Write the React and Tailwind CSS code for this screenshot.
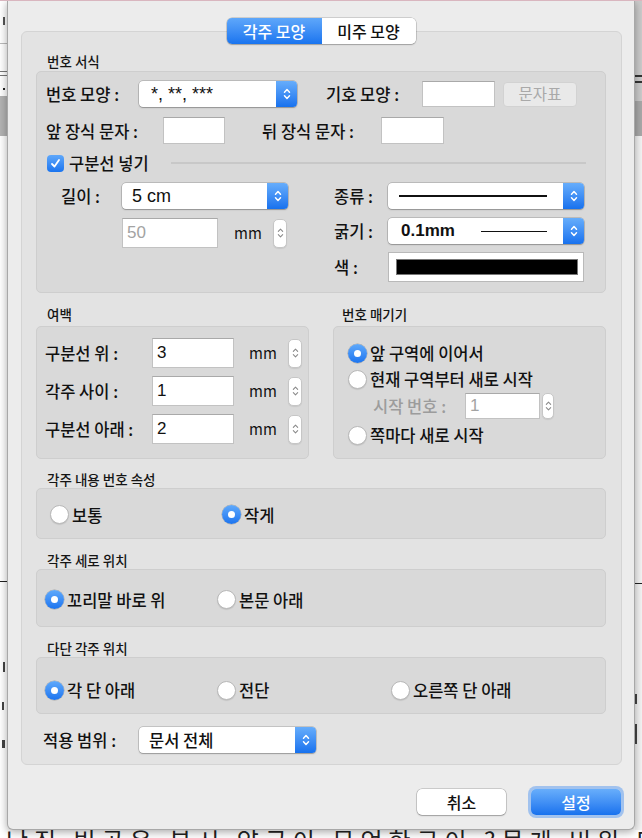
import React from "react";

const Chevrons = ({ color = "white", w = 8, h = 14, sw = 1.5 }) => (
  <svg width={w} height={h} viewBox="0 0 8 14" fill="none" stroke={color} strokeWidth={sw} strokeLinecap="round" strokeLinejoin="round">
    <path d="M1.5 5.2 L4 2.6 L6.5 5.2" />
    <path d="M1.5 8.8 L4 11.4 L6.5 8.8" />
  </svg>
);

function Select({ w, children }) {
  return (
    <div className={`flex ${w} h-[26px] rounded-[4px] bg-white shadow-[0_0_0_0.5px_rgba(0,0,0,0.28),0_1px_1.5px_rgba(0,0,0,0.22)] overflow-hidden shrink-0`}>
      <div className="flex-1 flex items-center pl-[10px] min-w-0">{children}</div>
      <div className="w-[21px] bg-gradient-to-b from-[#66adfb] to-[#1671ee] flex items-center justify-center">
        <Chevrons />
      </div>
    </div>
  );
}

function Input({ w, h, children, disabled }) {
  return (
    <div className={`${w} ${h} shrink-0 bg-white border border-[#c2c2c2] border-t-[#a9a9a9] flex items-center pl-[4px] font-['Liberation_Sans',sans-serif] text-[17px] ${disabled ? "text-[#a3a3a3]" : "text-[#111]"}`}>
      {children}
    </div>
  );
}

function Stepper({ w = "w-[14px]", h = "h-[29px]" }) {
  return (
    <div className={`${w} ${h} shrink-0 rounded-[5px] bg-white border border-[#c6c6c6] shadow-[0_1px_1px_rgba(0,0,0,0.08)] flex items-center justify-center`}>
      <Chevrons color="#8a8a8a" w={7} h={14} sw={1.2} />
    </div>
  );
}

function Radio({ on }) {
  return on ? (
    <div className="w-[19px] h-[19px] shrink-0 rounded-full bg-gradient-to-b from-[#5fa9fb] to-[#1b74ef] shadow-[0_0_0_0.5px_rgba(0,0,0,0.25)] flex items-center justify-center">
      <div className="w-[7px] h-[7px] rounded-full bg-white" />
    </div>
  ) : (
    <div className="w-[19px] h-[19px] shrink-0 rounded-full bg-white border border-[#b8b8b8] shadow-[0_1px_1px_rgba(0,0,0,0.1)]" />
  );
}

function Option({ on, w, children }) {
  return (
    <div className={`flex items-center ${w} shrink-0`}>
      <Radio on={on} />
      <span className="ml-[3px] text-[16.5px] leading-[20px] font-medium">{children}</span>
    </div>
  );
}

function GroupLabel({ children, ml = "ml-[11px]" }) {
  return <div className={`${ml} h-[16px] leading-[16px] text-[13.5px] font-medium text-[#151515]`}>{children}</div>;
}

const Label = ({ w, children, className = "" }) => (
  <span className={`${w} shrink-0 text-[16.5px] leading-[20px] font-medium whitespace-nowrap ${className}`}>{children}</span>
);

function Dialog() {
  return (
    <div className="relative z-10 w-[628px] h-[829px] shrink-0 bg-[#ececec] border-x border-b border-[#a8a8a8] rounded-b-[6px] shadow-[0_2px_8px_rgba(0,0,0,0.35)] flex flex-col pt-[17px]">
      {/* Tabs */}
      <div className="relative z-10 flex justify-center">
        <div className="flex h-[26px] rounded-[5px] shadow-[0_0_0_0.5px_rgba(0,0,0,0.25),0_1px_1.5px_rgba(0,0,0,0.2)] overflow-hidden text-[16px] font-medium">
          <div className="w-[95px] bg-gradient-to-b from-[#5ea7fa] to-[#1874ef] text-white flex items-center justify-center">각주 모양</div>
          <div className="w-[94px] bg-white text-[#111] flex items-center justify-center">미주 모양</div>
        </div>
      </div>

      {/* Outer group */}
      <div className="-mt-[13px] ml-[13px] w-[601px] h-[734px] shrink-0 rounded-[6px] bg-[#e3e3e3] border border-[#d4d4d4] pl-[14px] pt-[21px] flex flex-col">
        <GroupLabel>번호 서식</GroupLabel>
        <div className="mt-[2px] w-[570px] h-[222px] shrink-0 rounded-[5px] bg-[#d9d9d9] border border-[#cecece] pl-[9px] pt-[9px] flex flex-col">
          <div className="flex items-center h-[26px]">
            <Label w="w-[93px]">번호 모양 :</Label>
            <Select w="w-[158px]">
              <span className="font-['Liberation_Sans',sans-serif] text-[18px] ml-[2px]">*, **, ***</span>
            </Select>
            <Label w="w-[96px]" className="ml-[29px]">기호 모양 :</Label>
            <Input w="w-[73px]" h="h-[26px]" />
            <div className="ml-[8px] w-[74px] h-[25px] rounded-[4px] bg-[#e9e9e9] border border-[#d2d2d2] text-[#a9a9a9] text-[15.5px] flex items-center justify-center">문자표</div>
          </div>
          <div className="mt-[10px] flex items-center h-[27px]">
            <Label w="w-[117px]">앞 장식 문자 :</Label>
            <Input w="w-[62px]" h="h-[27px]" />
            <Label w="w-[119px]" className="ml-[37px]">뒤 장식 문자 :</Label>
            <Input w="w-[63px]" h="h-[27px]" />
          </div>
          <div className="mt-[9px] flex items-center h-[20px] pr-[19px]">
            <div className="ml-[1px] w-[17px] h-[17px] rounded-[4px] bg-gradient-to-b from-[#5ea7fa] to-[#1874ef] flex items-center justify-center">
              <svg width="11" height="11" viewBox="0 0 11 11" fill="none" stroke="white" strokeWidth="1.8" strokeLinecap="round" strokeLinejoin="round">
                <path d="M2 6 L4.5 8.5 L9 2" />
              </svg>
            </div>
            <span className="ml-[5px] text-[16.5px] leading-[20px] font-medium">구분선 넣기</span>
            <div className="flex-1 ml-[22px] h-[2px] bg-[#c8c8c8]" />
          </div>
          <div className="mt-[10px] flex">
            <div className="w-[288px] shrink-0 pl-[15px] flex flex-col">
              <div className="flex items-center h-[26px]">
                <Label w="w-[61px]">길이 :</Label>
                <Select w="w-[166px]">
                  <span className="font-['Liberation_Sans',sans-serif] text-[18px]">5 cm</span>
                </Select>
              </div>
              <div className="mt-[9px] flex items-center h-[30px]">
                <div className="w-[61px] shrink-0" />
                <Input w="w-[96px]" h="h-[30px]" disabled>50</Input>
                <span className="ml-[16px] text-[15px] w-[25px] shrink-0">mm</span>
                <div className="ml-[14px]"><Stepper /></div>
              </div>
            </div>
            <div className="flex flex-col">
              <div className="flex items-center h-[26px]">
                <Label w="w-[54px]">종류 :</Label>
                <Select w="w-[196px]">
                  <div className="w-[148px] h-[2px] bg-[#111] ml-[1px]" />
                </Select>
              </div>
              <div className="mt-[9px] flex items-center h-[26px]">
                <Label w="w-[54px]">굵기 :</Label>
                <Select w="w-[196px]">
                  <span className="font-['Liberation_Sans',sans-serif] text-[17px] font-bold w-[80px] shrink-0 ml-[3px]">0.1mm</span>
                  <div className="w-[66px] h-[1px] bg-[#111]" />
                </Select>
              </div>
              <div className="mt-[8px] flex items-center h-[30px]">
                <Label w="w-[54px]">색 :</Label>
                <div className="w-[196px] h-[30px] bg-white border border-[#b9b9b9] pl-[7px] pr-[5px] py-[6px] flex">
                  <div className="flex-1 bg-black border border-[#777]" />
                </div>
              </div>
            </div>
          </div>
        </div>

        {/* 여백 / 번호 매기기 */}
        <div className="mt-[13px] flex">
          <div className="w-[273px] shrink-0 flex flex-col">
            <GroupLabel>여백</GroupLabel>
            <div className="mt-[4px] h-[133px] rounded-[5px] bg-[#d9d9d9] border border-[#cecece] pl-[8px] pt-[11px] flex flex-col">
              {[
                ["구분선 위 :", "3"],
                ["각주 사이 :", "1"],
                ["구분선 아래 :", "2"],
              ].map(([l, v], i) => (
                <div key={l} className={`flex items-center h-[30px] ${i ? "mt-[8px]" : ""}`}>
                  <Label w="w-[107px]">{l}</Label>
                  <Input w="w-[82px]" h="h-[30px]">{v}</Input>
                  <span className="ml-[15px] text-[15px] w-[25px] shrink-0">mm</span>
                  <div className="ml-[14px]"><Stepper /></div>
                </div>
              ))}
            </div>
          </div>
          <div className="ml-[24px] w-[273px] shrink-0 flex flex-col">
            <GroupLabel ml="ml-[9px]">번호 매기기</GroupLabel>
            <div className="mt-[4px] h-[133px] rounded-[5px] bg-[#d9d9d9] border border-[#cecece] pl-[14px] pt-[16px] flex flex-col">
              <Option on w="w-auto">앞 구역에 이어서</Option>
              <div className="mt-[6px]"><Option w="w-auto">현재 구역부터 새로 시작</Option></div>
              <div className="mt-[4px] flex items-center h-[26px]">
                <Label w="w-[92px]" className="ml-[25px] text-[#9c9c9c]">시작 번호 :</Label>
                <Input w="w-[75px]" h="h-[26px]" disabled>1</Input>
                <div className="ml-[2px]"><Stepper w="w-[12px]" h="h-[26px]" /></div>
              </div>
              <div className="mt-[6px]"><Option w="w-auto">쪽마다 새로 시작</Option></div>
            </div>
          </div>
        </div>

        {/* 각주 내용 번호 속성 */}
        <div className="mt-[12px]"><GroupLabel>각주 내용 번호 속성</GroupLabel></div>
        <div className="mt-[1px] w-[570px] h-[51px] shrink-0 rounded-[5px] bg-[#d9d9d9] border border-[#cecece] pl-[13px] pt-[2px] flex items-center">
          <Option w="w-[172px]">보통</Option>
          <Option on w="w-[172px]">작게</Option>
        </div>

        {/* 각주 세로 위치 */}
        <div className="mt-[13px]"><GroupLabel>각주 세로 위치</GroupLabel></div>
        <div className="mt-[1px] w-[570px] h-[58px] shrink-0 rounded-[5px] bg-[#d9d9d9] border border-[#cecece] pl-[8px] pt-[3px] flex items-center">
          <Option on w="w-[172px]">꼬리말 바로 위</Option>
          <Option w="w-[172px]">본문 아래</Option>
        </div>

        {/* 다단 각주 위치 */}
        <div className="mt-[13px]"><GroupLabel>다단 각주 위치</GroupLabel></div>
        <div className="mt-[1px] w-[570px] h-[57px] shrink-0 rounded-[5px] bg-[#d9d9d9] border border-[#cecece] pl-[8px] pt-[9px] flex items-center">
          <Option on w="w-[172px]">각 단 아래</Option>
          <Option w="w-[174px]">전단</Option>
          <Option w="w-[172px]">오른쪽 단 아래</Option>
        </div>

        <div className="mt-[13px] flex items-center h-[26px]">
          <Label w="w-[96px]" className="ml-[7px]">적용 범위 :</Label>
          <Select w="w-[177px]">
            <span className="text-[16.5px] font-medium">문서 전체</span>
          </Select>
        </div>
      </div>

      {/* Buttons */}
      <div className="mt-[24px] flex justify-end pr-[13px]">
        <div className="w-[89px] h-[26px] rounded-[5px] bg-white shadow-[0_0_0_0.5px_rgba(0,0,0,0.28),0_1px_1.5px_rgba(0,0,0,0.22)] text-[16px] font-medium flex items-center justify-center">취소</div>
        <div className="ml-[25px] w-[90px] h-[26px] rounded-[5px] bg-gradient-to-b from-[#68aefb] to-[#1671ee] text-white text-[16px] font-medium flex items-center justify-center shadow-[0_0_0_3px_rgba(100,160,240,0.55)]">설정</div>
      </div>
    </div>
  );
}

function LeftStrip() {
  return (
    <div className="w-[7px] shrink-0 bg-white flex flex-col overflow-hidden">
      <div className="mt-[16px] h-[8px] w-[5px] border-r-2 border-[#555]" />
      <div className="mt-[18px] h-[1px] bg-[#bbb]" />
      <div className="mt-[27px] h-[1px] bg-[#777]" />
      <div className="mt-[3px] h-[1px] bg-[#777]" />
      <div className="mt-[12px] h-[2px] w-[2px] ml-[3px] bg-[#222]" />
      <div className="mt-[6px] h-[40px] bg-[#b3b3b3]" />
      <div className="mt-[445px] h-[1px] bg-[#222]" />
      <div className="mt-[80px] h-[10px] w-[2px] ml-[3px] bg-[#444]" />
      <div className="mt-[30px] h-[8px] w-[2px] ml-[2px] bg-[#444]" />
      <div className="mt-[30px] h-[8px] w-[3px] ml-[2px] bg-[#444]" />
    </div>
  );
}

function RightStrip() {
  return (
    <div className="flex-1 bg-[#f4f4f4] flex flex-col overflow-hidden">
      <div className="h-[135px] bg-[#cbcbcb] flex flex-col">
        <div className="mt-[74px] h-[2px] bg-[#333]" />
        <div className="mt-[4px] h-[2px] bg-[#333]" />
        <div className="mt-[18px] h-[35px] bg-[#a9a9a9]" />
      </div>
      <div className="mt-[447px] h-[1px] bg-[#222]" />
      <div className="mt-[110px] h-[10px] w-[2px] bg-[#444]" />
      <div className="mt-[20px] h-[20px] w-[2px] bg-[#444]" />
    </div>
  );
}

function BottomText() {
  return (
    <div className="h-[8px] overflow-hidden pl-[6px]">
      <div className="-mt-[5px] text-[24px] leading-[30px] whitespace-nowrap text-[#222] tracking-[6px]">
        난직 빈곳은 분시 양국이 무엇한구이 ?묶게 비워 더직이지
      </div>
    </div>
  );
}

export default function App() {
  return (
    <div className="w-[642px] h-[838px] overflow-hidden bg-white flex flex-col border-t border-[#d9b6bf] font-['Noto_Sans_CJK_KR',sans-serif] text-[#111]">
      <div className="flex h-[829px] shrink-0">
        <LeftStrip />
        <Dialog />
        <RightStrip />
      </div>
      <BottomText />
    </div>
  );
}
